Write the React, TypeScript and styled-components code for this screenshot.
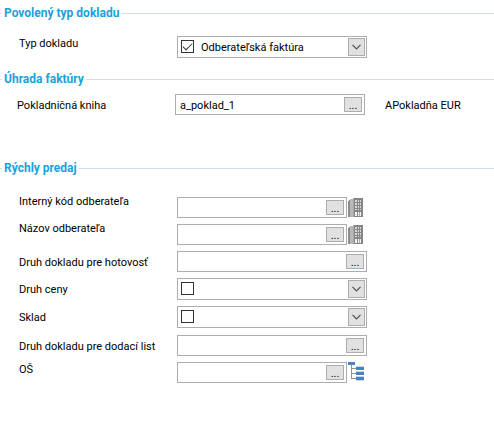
import React, { useId, useState } from "react";
import styled, { createGlobalStyle } from "styled-components";

const GlobalStyle = createGlobalStyle`
  *, *::before, *::after { box-sizing: border-box; }
  body {
    margin: 0;
    background: #ffffff;
    color: #000000;
    font-family: Roboto, "Liberation Sans", sans-serif;
    font-size: 11px;
    line-height: 14px;
  }
  button, input, select { font: inherit; color: inherit; }
`;

const Page = styled.form`
  display: flex;
  flex-direction: column;
  padding-top: 6px;
`;

const Section = styled.section<{ $space: number }>`
  display: flex;
  flex-direction: column;
  padding-bottom: ${(p) => p.$space}px;
`;

const Heading = styled.h2`
  display: flex;
  align-items: center;
  gap: 2px;
  margin: 0;
  color: #1ba1dc;
  font-size: 12px;
  font-weight: 700;
  line-height: 15px;
  white-space: nowrap;

  &::before,
  &::after {
    content: "";
    height: 1px;
    background: #d3dee6;
  }
  &::before { width: 2px; }
  &::after { flex: 1; }
`;

const Rows = styled.div<{ $top: number; $indent: number }>`
  display: flex;
  flex-direction: column;
  gap: 6px;
  padding-top: ${(p) => p.$top}px;
  padding-left: ${(p) => p.$indent}px;
`;

const Row = styled.div`
  display: grid;
  grid-template-columns: 158px minmax(120px, 190px) 1fr;
  align-items: center;
`;

type LabelPlace = "middle" | "upper" | "top";

const Label = styled.label<{ $place: LabelPlace }>`
  align-self: ${(p) => (p.$place === "middle" ? "center" : "start")};
  padding-top: ${(p) => (p.$place === "middle" ? 2 : 0)}px;
  line-height: ${(p) => ({ middle: 14, upper: 16, top: 10 })[p.$place]}px;
  white-space: nowrap;
`;

const Field = styled.div`
  display: flex;
  gap: 1px;
`;

const Box = styled.div<{ $combo?: boolean }>`
  display: flex;
  flex: 1;
  align-items: center;
  min-width: 0;
  height: ${(p) => (p.$combo ? 22 : 21)}px;
  padding: 0 ${(p) => (p.$combo ? 1 : 2)}px 0 3px;
  border: 1px solid #abadb3;
  background: #ffffff;
`;

const TextInput = styled.input`
  flex: 1;
  min-width: 0;
  height: 19px;
  padding: 1px 0 0 1px;
  border: 0;
  outline: 0;
  background: transparent;
`;

const MoreButton = styled.button`
  width: 18px;
  height: 15px;
  padding: 1px 0 0;
  border: 1px solid #adadad;
  background: #e1e1e1;
  line-height: 14px;
`;

const Check = styled.input`
  display: grid;
  place-items: center;
  align-self: start;
  appearance: none;
  flex: none;
  width: 13px;
  height: 13px;
  margin: 3px 0 0;
  border: 1px solid #333333;
  background: #ffffff;

  &:checked::before {
    content: "";
    width: 9px;
    height: 5px;
    margin-bottom: 3px;
    border: solid #333333;
    border-width: 0 0 1px 1px;
    transform: rotate(-45deg);
  }
`;

const SelectArea = styled.div`
  display: grid;
  flex: 1;
  align-items: center;
  min-width: 0;
  padding-left: 7px;
`;

const Select = styled.select`
  grid-area: 1 / 1;
  appearance: none;
  width: 100%;
  height: 18px;
  padding: 1px 20px 0 0;
  border: 0;
  outline: 0;
  background: transparent;
`;

const Arrow = styled.span`
  display: grid;
  grid-area: 1 / 1;
  place-items: center;
  justify-self: end;
  width: 17px;
  height: 18px;
  border: 1px solid #adadad;
  background: #e1e1e1;
  pointer-events: none;
`;

const IconButton = styled.button`
  display: flex;
  width: 19px;
  height: 21px;
  padding: 0;
  border: 0;
  background: transparent;
`;

const Note = styled.output`
  padding: 2px 0 0 20px;
  white-space: nowrap;
`;

const BuildingIcon = () => (
  <svg width="16" height="21" viewBox="0 0 16 21" shapeRendering="crispEdges" aria-hidden="true">
    <path d="M0 4h1V3h1V2h3v18H0z" fill="#8c8c8c" />
    <path d="M2 2h3v18H2z" fill="#b8b8b8" />
    <path d="M5 1h10v19H5z" fill="#868686" />
    <path d="M5 1h1v19H5z" fill="#a8a8a8" />
    <path
      d="M7 3h2v2H7zM10 3h1v2h-1zM12 3h1v2h-1zM7 6h2v2H7zM10 6h1v2h-1zM12 6h1v2h-1zM7 9h2v2H7zM10 9h1v2h-1zM12 9h1v2h-1zM7 12h2v1H7zM10 12h1v1h-1zM12 12h1v1h-1z"
      fill="#d8d8d8"
    />
    <path d="M7 15h2v4H7zM10 15h3v4h-3z" fill="#f4f4f4" />
    <path d="M11 15h1v4h-1z" fill="#a8a8a8" />
  </svg>
);

const TreeIcon = () => (
  <svg width="18" height="21" viewBox="0 0 18 21" shapeRendering="crispEdges" aria-hidden="true">
    <path d="M3 3h1v14H3zM4 6h4v1H4zM4 11h4v1H4zM4 16h4v1H4z" fill="#949494" />
    <path d="M0 0h7v3H0z" fill="#4a83bd" />
    <path d="M8 5h8v3H8zM8 10h8v3H8zM8 15h8v3H8z" fill="#4a83bd" />
    <path d="M8 4h8v1H8zM8 9h8v1H8zM8 14h8v1H8zM8 18h8v1H8z" fill="#c3d8eb" />
  </svg>
);

const Chevron = () => (
  <svg width="9" height="6" viewBox="0 0 9 6" aria-hidden="true">
    <path d="M.5 .8l4 4 4-4" fill="none" stroke="#505050" strokeWidth="1.2" />
  </svg>
);

type LookupProps = {
  label: string;
  value?: string;
  note?: string;
  place?: LabelPlace;
  icon?: React.ReactNode;
};

function LookupRow({ label, value = "", note, place = "middle", icon }: LookupProps) {
  const id = useId();
  return (
    <Row>
      <Label htmlFor={id} $place={place}>{label}</Label>
      <Field>
        <Box>
          <TextInput id={id} type="text" defaultValue={value} />
          <MoreButton type="button" aria-label={`${label} – vybrať`}>...</MoreButton>
        </Box>
        {icon && <IconButton type="button" aria-label={`${label} – zoznam`}>{icon}</IconButton>}
      </Field>
      {note && <Note htmlFor={id}>{note}</Note>}
    </Row>
  );
}

type ComboProps = { label: string; option?: string; checked?: boolean; place?: LabelPlace };

function ComboRow({ label, option = "", checked = false, place = "middle" }: ComboProps) {
  const id = useId();
  const [on, setOn] = useState(checked);
  return (
    <Row>
      <Label htmlFor={id} $place={place}>{label}</Label>
      <Field>
        <Box $combo>
          <Check
            type="checkbox"
            aria-label={`${label} – použiť`}
            checked={on}
            onChange={(e) => setOn(e.target.checked)}
          />
          <SelectArea>
            <Select id={id} defaultValue={option}>
              <option value={option}>{option}</option>
            </Select>
            <Arrow><Chevron /></Arrow>
          </SelectArea>
        </Box>
      </Field>
    </Row>
  );
}

export default function App() {
  return (
    <>
      <GlobalStyle />
      <Page>
        <Section $space={14}>
          <Heading>Povolený typ dokladu</Heading>
          <Rows $top={15} $indent={19}>
            <ComboRow label="Typ dokladu" option="Odberateľská faktúra" checked place="upper" />
          </Rows>
        </Section>
        <Section $space={46}>
          <Heading>Úhrada faktúry</Heading>
          <Rows $top={7} $indent={17}>
            <LookupRow label="Pokladničná kniha" value="a_poklad_1" note="APokladňa EUR" />
          </Rows>
        </Section>
        <Section $space={51}>
          <Heading>Rýchly predaj</Heading>
          <Rows $top={21} $indent={19}>
            <LookupRow label="Interný kód odberateľa" place="top" icon={<BuildingIcon />} />
            <LookupRow label="Názov odberateľa" place="top" icon={<BuildingIcon />} />
            <LookupRow label="Druh dokladu pre hotovosť" />
            <ComboRow label="Druh ceny" />
            <ComboRow label="Sklad" />
          </Rows>
          <Rows $top={7} $indent={19}>
            <LookupRow label="Druh dokladu pre dodací list" />
            <LookupRow label="OŠ" place="upper" icon={<TreeIcon />} />
          </Rows>
        </Section>
      </Page>
    </>
  );
}
